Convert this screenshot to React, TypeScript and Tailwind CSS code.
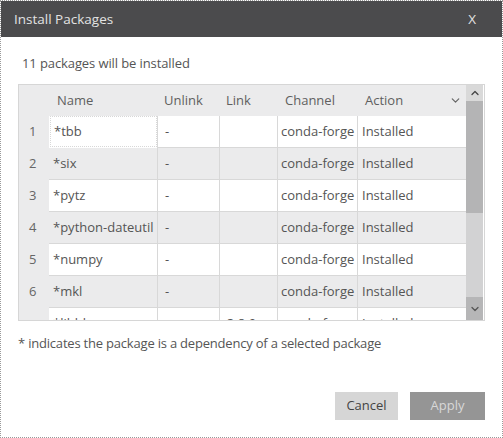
import { ChevronDown, ChevronUp } from "lucide-react";

interface Pkg {
  name: string;
  unlink: string;
  link: string;
  channel: string;
  action: string;
}

const packages: Pkg[] = [
  { name: "*tbb", unlink: "-", link: "", channel: "conda-forge", action: "Installed" },
  { name: "*six", unlink: "-", link: "", channel: "conda-forge", action: "Installed" },
  { name: "*pytz", unlink: "-", link: "", channel: "conda-forge", action: "Installed" },
  { name: "*python-dateutil", unlink: "-", link: "", channel: "conda-forge", action: "Installed" },
  { name: "*numpy", unlink: "-", link: "", channel: "conda-forge", action: "Installed" },
  { name: "*mkl", unlink: "-", link: "", channel: "conda-forge", action: "Installed" },
  { name: "*libblas", unlink: "", link: "3.8.0", channel: "conda-forge", action: "Installed" },
];

const cols = "grid grid-cols-[30px_108px_62px_58px_80px_109px]";

export default function App() {
  return (
    <div
      className="w-[503px] h-[438px] bg-white border border-dotted border-[#9a9a9a] flex flex-col text-[13px] text-[#555]"
      style={{ fontFamily: "'Open Sans', 'Noto Sans', sans-serif" }}
    >
      {/* Title bar */}
      <div className="h-[36px] shrink-0 bg-[#4b4b4d] flex items-center justify-between pl-[13px] pr-[26px] text-[#e2e2e2] text-[13.5px]">
        <span>Install Packages</span>
        <span>X</span>
      </div>

      <div className="flex flex-col px-[17px] flex-1">
        <p className="mt-[17px] ml-[4px] leading-[18px] tracking-[-0.1px]">11 packages will be installed</p>

        {/* Table */}
        <div className="mt-[12px] h-[237px] border border-[#d6d6d6] flex overflow-hidden">
          <div className="w-[447px] flex flex-col">
            <div className={`${cols} h-[31px] shrink-0 bg-[#ebebec] items-center text-[#5f5f5f]`}>
              <span />
              <span className="pl-[8px]">Name</span>
              <span className="pl-[7px]">Unlink</span>
              <span className="pl-[7px]">Link</span>
              <span className="pl-[8px]">Channel</span>
              <span className="pl-[8px] pr-[4px] flex items-center justify-between">
                Action
                <ChevronDown size={13} strokeWidth={2.2} className="text-[#666]" />
              </span>
            </div>
            {packages.map((p, i) => (
              <div
                key={p.name}
                className={`${cols} h-[32px] shrink-0 items-stretch ${i % 2 === 1 ? "bg-[#ebebec]" : ""}`}
              >
                <span className="bg-[#ebebec] flex items-center pl-[10px] text-[#666]">
                  {i < 6 ? i + 1 : ""}
                </span>
                <span
                  className={`flex items-center pl-[3px] border-b border-[#d8d8d8] ${
                    i === 0 ? "border border-dotted border-[#222] mb-[1px] ml-[1px]" : "pl-[4px]"
                  } ${i % 2 === 0 ? "bg-white" : ""}`}
                >
                  {p.name}
                </span>
                <span className="flex items-center pl-[7px] border-l border-b border-[#d8d8d8]">{p.unlink}</span>
                <span className="flex items-center pl-[7px] border-l border-b border-[#d8d8d8]">{p.link}</span>
                <span className="flex items-center pl-[3px] border-l border-b border-[#d8d8d8]">{p.channel}</span>
                <span className="flex items-center pl-[4px] border-l border-b border-[#d8d8d8]">{p.action}</span>
              </div>
            ))}
          </div>

          {/* Scrollbar */}
          <div className="w-[17px] flex flex-col">
            <div className="h-[16px] bg-[#d9d9d9] flex items-center justify-center">
              <ChevronUp size={12} strokeWidth={2.6} className="text-[#444]" />
            </div>
            <div className="h-[112px] bg-[#b4b4b5]" />
            <div className="flex-1 bg-[#d2d2d3]" />
            <div className="h-[23px] bg-[#b6b6b7] flex items-center justify-center">
              <ChevronDown size={12} strokeWidth={2.6} className="text-[#555]" />
            </div>
          </div>
        </div>

        <p className="mt-[13px] leading-[18px] tracking-[-0.2px]">
          * indicates the package is a dependency of a selected package
        </p>

        <div className="mt-[40px] flex justify-end gap-[12px]">
          <button className="w-[63px] h-[28px] bg-[#d6d6d6] text-[#444]">Cancel</button>
          <button className="w-[75px] h-[28px] bg-[#959595] text-[#d8d8d8]">Apply</button>
        </div>
      </div>
    </div>
  );
}
